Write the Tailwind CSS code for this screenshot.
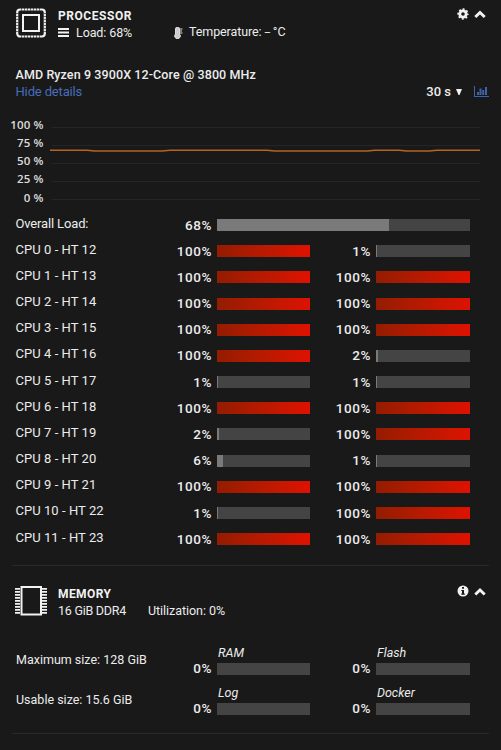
<!DOCTYPE html>
<html lang="en">
<head>
    <meta charset="UTF-8">
    <meta name="viewport" content="width=device-width, initial-scale=1.0">
    <title>Dashboard</title>
    <script src="https://cdn.jsdelivr.net/npm/@tailwindcss/browser@4"></script>
</head>
<body class="w-[501px] h-[750px] overflow-hidden bg-[#191919] text-[#ececec] font-['Roboto','Noto_Sans',sans-serif] text-[13px] leading-4 whitespace-nowrap">

    <!-- Processor -->
    <section class="h-[565px] pt-2">
        <header class="flex h-[59px] pl-4 pr-[15px]">
            <svg class="w-[30px] h-[30px] shrink-0" viewBox="0 0 30 30" fill="none" stroke="#f2f2f2">
                <rect x="1.2" y="1.5" width="27.6" height="27" rx="3" stroke-width="2.2"/>
                <path d="M5 1.4h20M5 28.6h20M1.2 5v20M28.8 5v20" stroke-width="2.6" stroke="#191919" stroke-dasharray="1 2" opacity=".6"/>
                <rect x="7" y="7" width="16" height="16" stroke-width="2"/>
            </svg>
            <div class="ml-3 grow">
                <h2 class="h-4 text-[12px] font-bold tracking-[0.55px] text-[#f2f2f2]">PROCESSOR</h2>
                <div class="flex items-center h-[17px] text-[12.5px]">
                    <svg class="w-[11px] h-[9px] mr-[7px]" viewBox="0 0 11 9" fill="#f2f2f2"><path d="M0 0h11v2H0zM0 3.5h11v2H0zM0 7h11v2H0z"/></svg>
                    <span class="w-[98px] tracking-[-0.1px]">Load: 68%</span>
                    <svg class="w-[9px] h-3 mr-1.5" viewBox="0 0 9 12"><path d="M1.5 2a2 2 0 0 1 4 0v5a2.8 2.8 0 1 1-4 0z" fill="#ccc" stroke="#ddd" stroke-width="1"/><path d="M6 2h2.500M6 4h2M6 6h2.500" stroke="#ddd"/></svg>
                    <span class="tracking-[-0.1px]">Temperature: <span class="text-[10px] tracking-[-1.3px]">---</span><span class="ml-1">°C</span></span>
                </div>
            </div>
            <div class="flex items-center gap-[5px] h-3">
                <svg class="w-3 h-3" viewBox="0 0 12 12" fill="none" stroke="#f2f2f2"><circle cx="6" cy="6" r="3.200" stroke-width="2.800"/><circle cx="6" cy="6" r="4.800" stroke-width="1.700" stroke-dasharray="1.900 1.870" stroke-dashoffset=".95"/></svg>
                <svg class="w-3 h-3" viewBox="0 0 12 12" fill="none" stroke="#f2f2f2" stroke-width="2.900"><path d="M1.300 9 6 4.500 10.700 9"/></svg>
            </div>
        </header>

        <div class="flex flex-col h-[50px] pl-[15.5px] pr-3">
            <div class="h-4 font-medium text-[12.5px] tracking-[0.1px]">AMD Ryzen 9 3900X 12-Core @ 3800 MHz</div>
            <div class="flex items-center h-[17px]">
                <span class="text-[#486dba] tracking-[-0.15px]">Hide details</span>
                <span class="ml-auto font-medium">30 s</span>
                <svg class="w-[6px] h-[6px] ml-[5px] mr-[12px]" viewBox="0 0 6 6" fill="#f2f2f2"><path d="M0 0h6L3.500 6h-1z"/></svg>
                <svg class="w-[15px] h-[11px]" viewBox="0 0 15 11" fill="#3f62ad"><path d="M0 0h1v10h14v1H0zM3 6h2v3H3zM5.500 2.500h2V9h-2zM8.200 4h2v5h-2zM11 1h2v8h-2z"/></svg>
            </div>
        </div>

        <!-- Load history -->
        <div class="flex h-[97px]">
            <div class="w-[43.5px] -mt-[1.5px] flex flex-col text-right font-['Open_Sans',sans-serif] font-semibold text-[11.5px] leading-[18.3px] tracking-[0.1px] text-[#dcdcdc]">
                <span>100 %</span><span>75 %</span><span>50 %</span><span>25 %</span><span>0 %</span>
            </div>
            <svg class="w-[430px] h-[92px] ml-[6.5px]" viewBox="0 0 430 92" fill="none">
                <path d="M2 10.500h428M2 28.500h428M2 46.500h428M2 64.500h428M2 82.500h428" stroke="#252525"/>
                <path d="M0 33.300h37l8 .7h67l8-.7h97l8 .7h92l8-.7h24l8 .7h22l8-.7h43" stroke="#b7641c" stroke-width="1.400"/>
            </svg>
        </div>

        <div class="pl-4" id="loads"></div>
    </section>

    <!-- Memory -->
    <section class="mx-3 h-[169px] border-y border-[#2a2a2a]">
        <header class="flex h-[85px] pt-5 pl-[3px] pr-[3px]">
            <svg class="w-8 h-[30px] shrink-0" viewBox="0 0 32 30" fill="none" stroke="#f2f2f2">
                <rect x="6.500" y="1" width="19.500" height="27.500" stroke-width="2"/>
                <path d="M2.500 2v26M29.500 2v26" stroke-width="5" stroke-dasharray="1.800 1.200"/>
            </svg>
            <div class="ml-[11px] grow">
                <h2 class="h-4 text-[12px] font-bold tracking-[0.4px] text-[#f2f2f2]">MEMORY</h2>
                <div class="flex items-center h-[17px] text-[12.5px] tracking-[-0.25px]"><span class="w-[90px]">16 GiB DDR4</span><span class="tracking-[-0.05px]">Utilization: 0%</span></div>
            </div>
            <div class="flex items-center gap-[5px] h-3 -mt-px">
                <svg class="w-3 h-3" viewBox="0 0 12 12"><circle cx="6" cy="6" r="5.500" fill="#f2f2f2"/><path d="M5 2h2v1.700H5zM4.300 5H7v3.500h.8v1.200H4.300V8.500H5V6.100h-.7z" fill="#191919"/></svg>
                <svg class="w-3 h-3" viewBox="0 0 12 12" fill="none" stroke="#f2f2f2" stroke-width="2.900"><path d="M1.300 9.500 6 5l4.700 4.500"/></svg>
            </div>
        </header>
        <div id="memory" class="flex flex-col -mt-1.5 pl-1"></div>
    </section>

    <script>
        const cores = [[100, 1], [100, 100], [100, 100], [100, 100], [100, 2], [1, 1],
                       [100, 100], [2, 100], [6, 1], [100, 100], [1, 100], [100, 100]];

        const fill = v => `<div class="h-3 ${v >= 90 ? 'bg-linear-to-r from-[#941c00] to-[#de1100]' : 'bg-[#7a7a7a]'}" style="width:${v}%"></div>`;
        const pct = v => `<span class="w-[54px] mt-[-2.4px] pr-[5px] text-right font-medium text-[13.5px] tracking-[0.6px]">${v}%</span>`;

        document.getElementById('loads').innerHTML =
            `<div class="flex h-[26.18px] pt-[5px]">
                <span class="w-[147px] mt-[-3.5px] -ml-[0.5px] mr-[0.5px] tracking-[-0.15px]">Overall Load:</span>${pct(68)}
                <div class="w-[253px] h-3 bg-[#444444]">${fill(68)}</div>
            </div>` +
            cores.map(([a, b], i) => `<div class="flex h-[26.18px] pt-[5px]">
                <span class="w-[147px] mt-[-3.5px] -ml-[0.5px] mr-[0.5px] tracking-[0.05px]">CPU ${i} - HT ${i + 12}</span>${pct(a)}
                <div class="w-[93px] h-3 bg-[#444444]">${fill(a)}</div>
                <div class="w-3"></div>${pct(b)}
                <div class="w-[94px] h-3 bg-[#444444]">${fill(b)}</div>
            </div>`).join('');

        const sizes = [['Maximum size: 128 GiB', 'RAM', 'Flash'], ['Usable size: 15.6 GiB', 'Log', 'Docker']];

        document.getElementById('memory').innerHTML = sizes.map(([size, a, b]) => `<div class="flex h-[39.7px]">
                <span class="w-[147px] mt-[7px] text-[12.5px]">${size}</span>
                <span class="w-[54px] mt-[15.3px] pr-[5px] text-right font-medium text-[13.5px] tracking-[0.6px]">0%</span>
                <div class="w-[93px]"><div class="h-[18px] pl-px italic text-[12.5px]">${a}</div><div class="h-3 bg-[#444444]"></div></div>
                <div class="w-3"></div>
                <span class="w-[54px] mt-[15.3px] pr-[5px] text-right font-medium text-[13.5px] tracking-[0.6px]">0%</span>
                <div class="w-[94px]"><div class="h-[18px] pl-px italic text-[12.5px]">${b}</div><div class="h-3 bg-[#444444]"></div></div>
            </div>`).join('');
    </script>
</body>
</html>
